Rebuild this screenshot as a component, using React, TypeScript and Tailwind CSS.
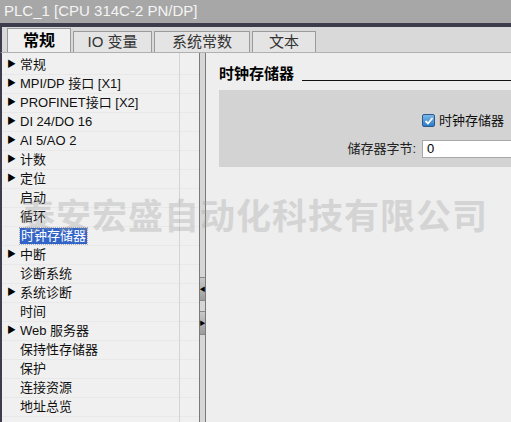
import React from 'react';

const font = '"Liberation Sans", "Noto Sans CJK SC", sans-serif';

const items: { label: string; arrow: boolean; selected?: boolean }[] = [
    { label: '常规', arrow: true },
    { label: 'MPI/DP 接口 [X1]', arrow: true },
    { label: 'PROFINET接口 [X2]', arrow: true },
    { label: 'DI 24/DO 16', arrow: true },
    { label: 'AI 5/AO 2', arrow: true },
    { label: '计数', arrow: true },
    { label: '定位', arrow: true },
    { label: '启动', arrow: false },
    { label: '循环', arrow: false },
    { label: '时钟存储器', arrow: false, selected: true },
    { label: '中断', arrow: true },
    { label: '诊断系统', arrow: false },
    { label: '系统诊断', arrow: true },
    { label: '时间', arrow: false },
    { label: 'Web 服务器', arrow: true },
    { label: '保持性存储器', arrow: false },
    { label: '保护', arrow: false },
    { label: '连接资源', arrow: false },
    { label: '地址总览', arrow: false },
];

const tabs = ['常规', 'IO 变量', '系统常数', '文本'];
const tabWidths = ['w-[64px]', 'w-[79px]', 'w-[96px]', 'w-[64px]'];

export default function App() {
    return (
        <div className="relative w-[511px] h-[422px] overflow-hidden bg-[#f0f0f0] flex flex-col" style={{ fontFamily: font }}>
            {/* title */}
            <div className="h-[23px] bg-[#a7a7a7] text-[#f4f4f4] text-[15px] pl-[4px] flex items-center shrink-0">
                PLC_1 [CPU 314C-2 PN/DP]
            </div>
            <div className="h-[4px] bg-[#3c3c4c] shrink-0" />

            {/* tabs */}
            <div className="h-[25px] bg-[#d9d9d9] border-l-2 border-[#3c3c4c] flex items-end pl-[5px] gap-[2px] shrink-0">
                {tabs.map((t, i) => (
                    <div
                        key={t}
                        className={`${tabWidths[i]} flex items-center justify-center border border-b-0 border-[#9a9a9a] ${
                            i === 0 ? 'h-[24px] bg-[#f0f0f0] font-bold text-[16px] text-black' : 'h-[21px] bg-[#e4e4e4] text-[15px] text-[#333]'
                        }`}
                    >
                        {t}
                    </div>
                ))}
            </div>

            {/* body */}
            <div className="flex flex-1 border-l-2 border-[#3c3c4c] border-t border-t-[#b0b0b0]">
                {/* tree */}
                <div className="w-[197px] shrink-0 flex flex-col pt-[3px] relative">
                    <div className="absolute left-[177px] top-0 bottom-0 w-px bg-[#d4d4d4]" />
                    {items.map((it) => (
                        <div key={it.label} className="h-[19px] flex items-center border-b border-[#e8e8e8] text-[13px] text-[#111]">
                            <span className="w-[18px] pl-[5px] text-[9px] text-black">{it.arrow ? '▶' : ''}</span>
                            {it.selected ? (
                                <span className="bg-[#3264c8] text-white px-[1px] outline outline-1 outline-dotted outline-[#aab] leading-[16px]">{it.label}</span>
                            ) : (
                                <span>{it.label}</span>
                            )}
                        </div>
                    ))}
                </div>

                {/* splitter */}
                <div className="w-[7px] shrink-0 bg-[#d6d6d6] border-x border-[#7a7a7a] flex flex-col pt-[224px] gap-[10px]">
                    <div className="h-[24px] bg-gradient-to-b from-[#c8c8c8] to-[#9c9c9c] border-y border-[#888] flex items-center justify-center text-[6px] text-black">◀</div>
                    <div className="h-[24px] bg-gradient-to-b from-[#c8c8c8] to-[#9c9c9c] border-y border-[#888] flex items-center justify-center text-[6px] text-black">▶</div>
                </div>

                {/* content */}
                <div className="flex-1 bg-[#eeeeee] pl-[13px] pt-[12px]">
                    <div className="flex items-end gap-[8px]">
                        <span className="font-bold text-[15px] text-black leading-[18px]">时钟存储器</span>
                        <div className="flex-1 h-px bg-[#111] mb-[2px]" />
                    </div>
                    <div className="mt-[7px] h-[77px] bg-[#d3d3d3] flex flex-col items-end pt-[21px]">
                        <div className="w-[89px] h-[19px] flex items-center gap-[4px]">
                            <span className="w-[13px] h-[13px] rounded-[2px] bg-gradient-to-b from-[#7ab8e8] to-[#2c7cc4] border border-[#2a5a90] flex items-center justify-center">
                                <svg viewBox="0 0 10 10" className="w-[10px] h-[10px]">
                                    <path d="M1.5 5 L4 7.5 L8.5 2" stroke="#fff" strokeWidth="1.8" fill="none" />
                                </svg>
                            </span>
                            <span className="text-[13px] text-[#111]">时钟存储器</span>
                        </div>
                        <div className="mt-[9px] flex items-center">
                            <span className="text-[13px] text-[#222] mr-[6px]">储存器字节:</span>
                            <div className="w-[89px] h-[18px] bg-white border border-[#a8a8a8] border-r-0 text-[13px] pl-[4px] leading-[16px]">0</div>
                        </div>
                    </div>
                </div>
            </div>

            {/* watermark */}
            <div className="absolute left-[20px] top-[188px] text-[35px] font-bold tracking-[1px] text-[#9a9a9a] opacity-30 pointer-events-none whitespace-nowrap" style={{ fontFamily: '"Noto Sans CJK SC", sans-serif' }}>
                泰安宏盛自动化科技有限公司
            </div>
        </div>
    );
}
